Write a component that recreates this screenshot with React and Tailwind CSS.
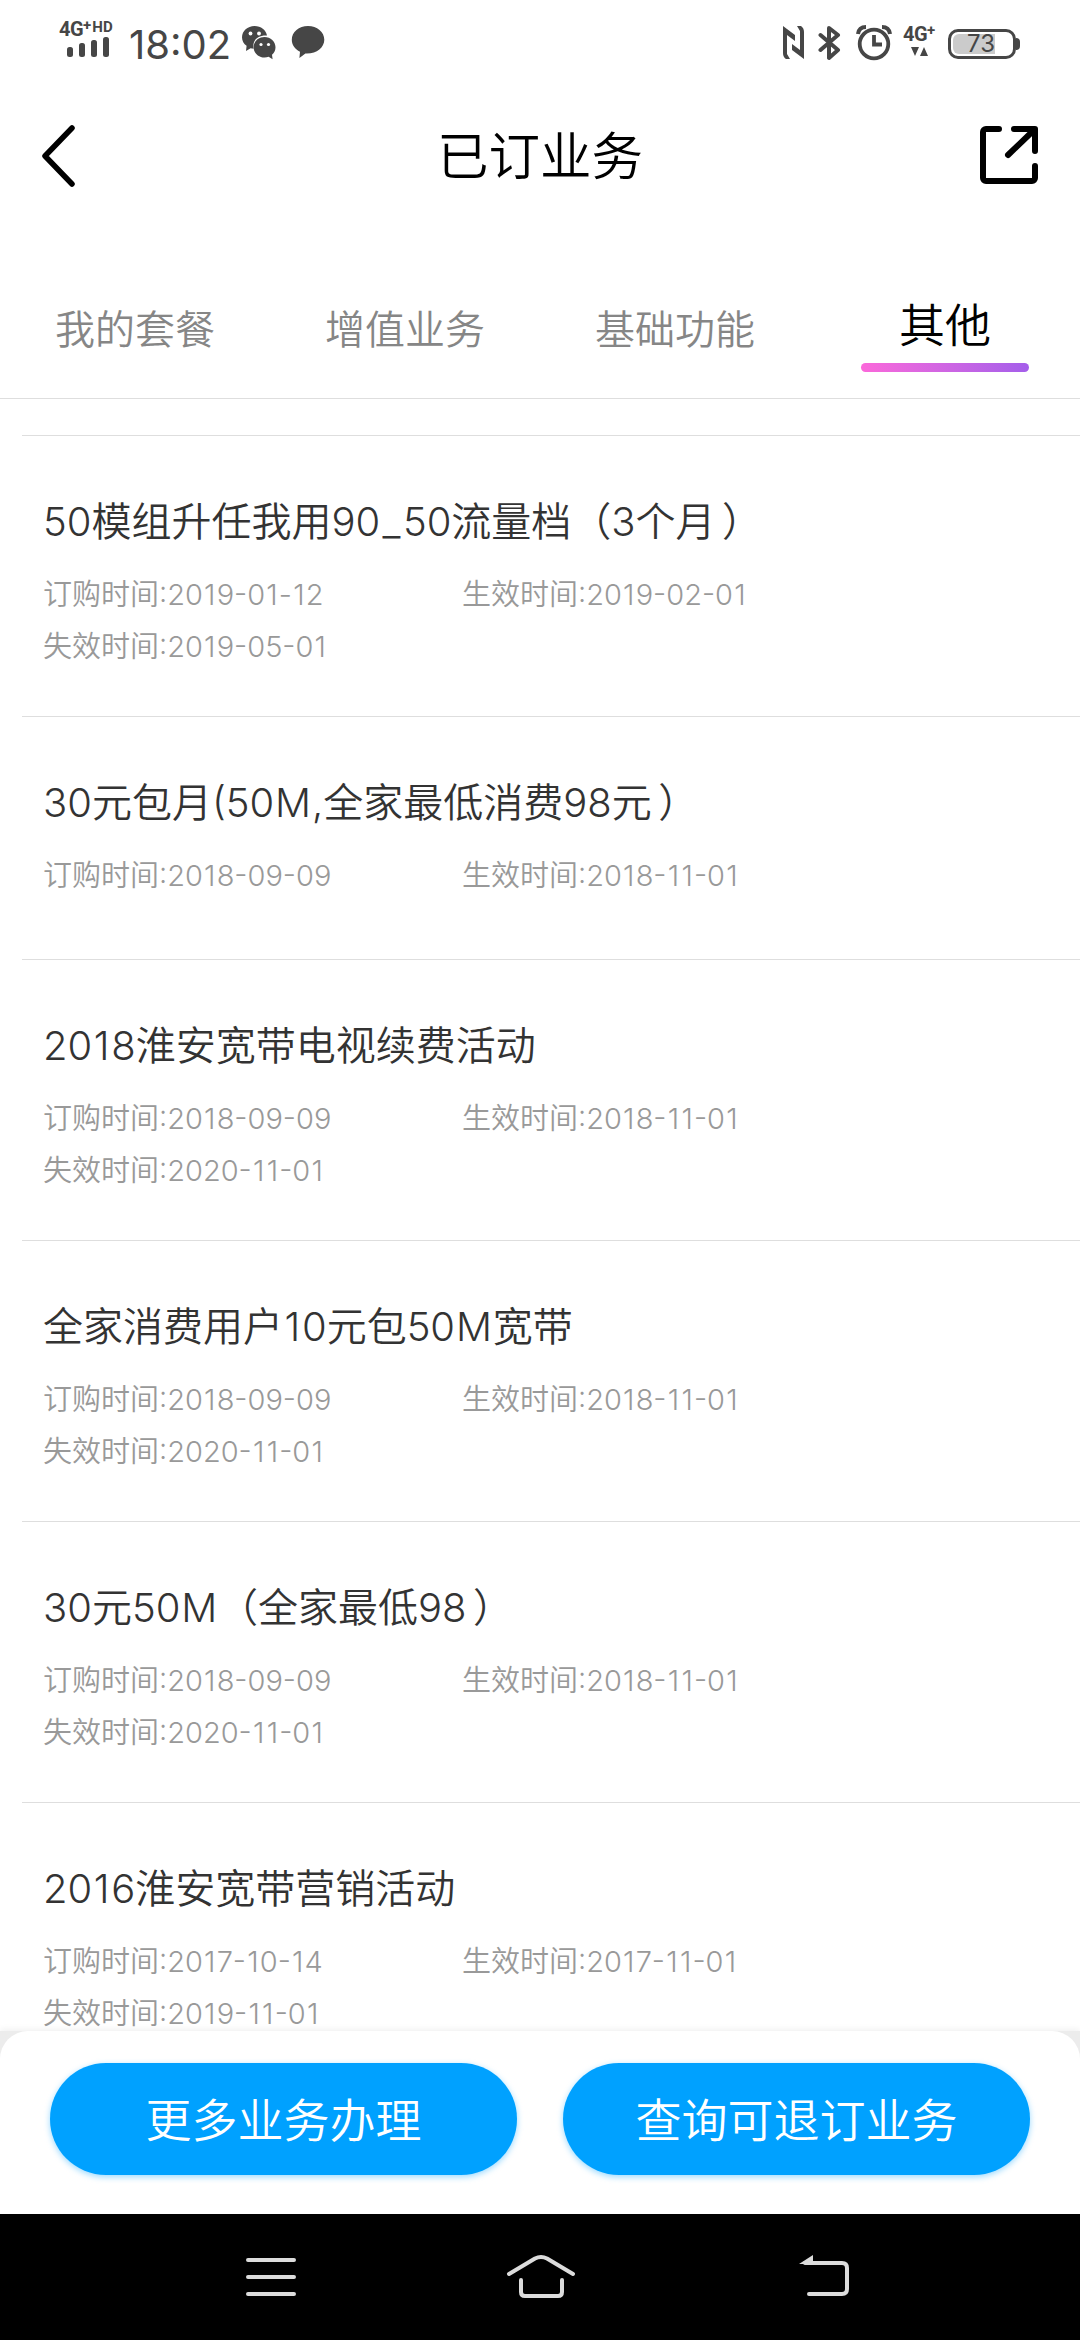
const tabs = ["我的套餐", "增值业务", "基础功能", "其他"];

const orders = [
  { name: "50模组升任我用90_50流量档（3个月）", ordered: "2019-01-12", start: "2019-02-01", end: "2019-05-01" },
  { name: "30元包月(50M,全家最低消费98元）", ordered: "2018-09-09", start: "2018-11-01" },
  { name: "2018淮安宽带电视续费活动", ordered: "2018-09-09", start: "2018-11-01", end: "2020-11-01" },
  { name: "全家消费用户10元包50M宽带", ordered: "2018-09-09", start: "2018-11-01", end: "2020-11-01" },
  { name: "30元50M（全家最低98）", ordered: "2018-09-09", start: "2018-11-01", end: "2020-11-01" },
  { name: "2016淮安宽带营销活动", ordered: "2017-10-14", start: "2017-11-01", end: "2019-11-01" },
];

const spacing = {
  1: "px-[0.04em]",
  _: "px-[0.06em]",
  M: "px-[0.02em]",
  "）": "pl-[0.16em]",
};

function Spaced({ text }) {
  return text.split(/([1_M）])/).map((part, i) =>
    spacing[part] ? (
      <span key={i} className={spacing[part]}>{part}</span>
    ) : (
      part
    )
  );
}

function StatusBar() {
  return (
    <div className="flex h-[84px] shrink-0 items-start justify-between pl-[59px] pr-[60px] text-[#464646]">
      <div className="flex">
        <div className="mt-[21px] flex w-[57px] flex-col">
          <div className="flex h-4 items-start font-['Roboto'] font-bold leading-4">
            <span className="text-[20px] tracking-[-0.5px]">4G</span>
            <span className="-mt-1 text-[15px]">+</span>
            <span className="-mt-[2px] ml-px text-[15px]">HD</span>
          </div>
          <svg className="ml-2" width="44" height="22" fill="currentColor">
            <rect x="0" y="10" width="6" height="10" rx="2.5" />
            <rect x="12" y="6" width="6" height="14" rx="2.5" />
            <rect x="24" y="3" width="6" height="17" rx="2.5" />
            <rect x="36" y="0" width="6" height="20" rx="2.5" />
          </svg>
        </div>
        <span className="ml-[13px] mt-[25px] w-[112px] text-[40px] font-[380] leading-10">18:02</span>
        {/* WeChat */}
        <svg className="mt-[25px]" width="36" height="36" fill="currentColor">
          <path d="M13.5 1C6.500 1 1 6 1 12.200c0 3.600 1.800 6.600 4.600 8.600L5 26l4.600-2.800 3 .5C11 15 17 10 26 10.500 25 5 20 1 13.500 1z" />
          <path d="M23.500 12c-6.100 0-10.900 4.600-10.900 10.200 0 5.700 4.900 10.300 10.900 10.300 1.500 0 2.900-.3 4.100-.8l4 2.500-.6-4.500c2.200-1.800 3.500-4.500 3.500-7.500C34.500 16.600 29.600 12 23.500 12z" />
          <g fill="#fff">
            <circle cx="9.500" cy="8.500" r="1.900" />
            <circle cx="18" cy="8.500" r="1.900" />
            <circle cx="20" cy="19.500" r="1.600" />
            <circle cx="27.500" cy="19.500" r="1.600" />
          </g>
        </svg>
        <svg className="ml-[14px] mt-[25px]" width="36" height="36" fill="currentColor">
          <path d="M17 1C8 1 .8 7 .8 14.700c0 5.300 3.300 9.600 8.200 12l-.6 6.300 6-4.600c11 .6 18.900-5.700 18.900-13.700C33.300 7 26 1 17 1z" />
        </svg>
      </div>
      <div className="flex">
        {/* NFC */}
        <svg className="mt-[26px]" width="21" height="33" fill="currentColor">
          <path d="M0 0l12 9v6L4 9v19l3 5H3Q0 31 0 27z" />
          <path d="M21 33L9 24v-6L17 24V5L14 0h4q3 2 3 6z" />
        </svg>
        <svg className="ml-[14px] mt-[25px]" width="24" height="36" fill="none" stroke="currentColor" strokeWidth="4" strokeLinecap="round" strokeLinejoin="round">
          <path d="M2.500 10L20 25 11 33V3l9 7L2.500 25" />
        </svg>
        <svg className="ml-[14px] mt-[24px]" width="38" height="37" fill="none" stroke="currentColor" strokeWidth="3.800">
          <circle cx="18" cy="20" r="14.300" />
          <path d="M18 11v9.500h8" />
          <path d="M2 10C2.500 6 5 3 10 3M34 10C33.500 6 31 3 26 3" strokeWidth="4" />
        </svg>
        <div className="ml-[9px] mt-[26px] flex w-[45px] flex-col font-['Roboto'] font-bold leading-4">
          <div className="flex h-[21px]">
            <span className="text-[20px] tracking-[-0.5px]">4G</span>
            <span className="-mt-1 text-[15px]">+</span>
          </div>
          <svg className="ml-2" width="18" height="9" fill="currentColor">
            <path d="M0 0h8L4 9zM9 9h8l-4-9z" />
          </svg>
        </div>
        <div className="mt-[27px] flex items-center">
          <div className="flex h-[30px] w-[68px] rounded-[10px] border-[3px] border-[#464646] p-[2px]">
            <div className="flex h-5 w-[42px] items-center justify-end rounded-l-[6px] bg-[#cbcbcb] text-[24px] leading-5">73</div>
          </div>
          <div className="h-3 w-1 rounded-r-full bg-[#464646]" />
        </div>
      </div>
    </div>
  );
}

function Header() {
  return (
    <header className="flex h-[142px] shrink-0 items-center justify-between pl-10 pr-10 text-black">
      <svg width="61" height="64" fill="none" stroke="currentColor" strokeWidth="5.500" strokeLinecap="round" strokeLinejoin="round">
        <path d="M32 5L5 33l27 28" />
      </svg>
      <h1 className="pt-[2px] text-[51.5px] font-[350] leading-[60px]">已订业务</h1>
      <svg width="61" height="60" fill="none" stroke="currentColor" strokeWidth="6" strokeLinecap="round" strokeLinejoin="round">
        <path d="M20 4H7a3 3 0 0 0-3 3v46a3 3 0 0 0 3 3h46a3 3 0 0 0 3-3V41" />
        <path d="M35 4h21v22M55 5L29 30" />
      </svg>
    </header>
  );
}

function Tabs({ active }) {
  return (
    <nav className="grid h-[173px] shrink-0 grid-cols-4 border-b border-[#dedede]">
      {tabs.map((tab) =>
        tab === active ? (
          <div key={tab} className="flex flex-col items-center pt-[69px] text-[46px] font-[350] leading-[60px] text-black">
            {tab}
            <div className="mt-2 h-[9px] w-[168px] rounded-full bg-linear-to-r from-[#fb68da] to-[#a45eea]" />
          </div>
        ) : (
          <div key={tab} className="pt-[74px] text-center text-[40px] font-[350] leading-[60px] text-[#868686]">
            {tab}
          </div>
        )
      )}
    </nav>
  );
}

function Order({ item }) {
  return (
    <li className={`ml-[22px] shrink-0 border-t border-[#dedede] pl-[21px] pt-[56px] font-[350] ${item.end ? "h-[281px]" : "h-[243px]"}`}>
      <h2 className="text-[40px] leading-[60px] text-[#333]">
        <Spaced text={item.name} />
      </h2>
      <div className="mt-[17px] grid grid-cols-[419px_1fr] text-[29px] leading-[52px] text-[#999]">
        <span>订购时间:<Spaced text={item.ordered} /></span>
        <span>生效时间:<Spaced text={item.start} /></span>
        {item.end && <span>失效时间:<Spaced text={item.end} /></span>}
      </div>
    </li>
  );
}

function SystemNav() {
  return (
    <div className="flex h-[126px] shrink-0 bg-black pl-[231px] pt-10 text-[#dcdcdc]">
      {/* menu, home, back */}
      <svg width="80" height="48" fill="none" stroke="currentColor" strokeWidth="4" strokeLinecap="round">
        <path d="M17 6h46M17 23h46M17 40h46" />
      </svg>
      <svg className="ml-[190px]" width="80" height="48" fill="none" stroke="currentColor" strokeWidth="4" strokeLinecap="round" strokeLinejoin="round">
        <path d="M8 20L34 4.500q6-3 12 0L72 20M20 26v12q0 4 4 4h33q4 0 4-4V26" />
      </svg>
      <svg className="ml-[206px]" width="80" height="48" fill="none" stroke="currentColor" strokeWidth="4" strokeLinecap="round">
        <path d="M18 9h37q5 0 5 5v21q0 5-5 5H22" />
        <path d="M12 10L26 1v9z" fill="currentColor" stroke="none" />
      </svg>
    </div>
  );
}

export default function App() {
  return (
    <div className="flex h-[2340px] w-[1080px] flex-col overflow-hidden bg-white font-['Inter','Noto_Sans_CJK_SC',sans-serif]">
      <StatusBar />
      <Header />
      <Tabs active="其他" />
      <ul className="flex min-h-0 flex-1 flex-col overflow-hidden pt-9">
        {orders.map((item) => (
          <Order key={item.name} item={item} />
        ))}
      </ul>
      <div className="h-[183px] shrink-0 bg-[#ececec] shadow-[0_-2px_6px_rgba(0,0,0,0.06)]">
        <div className="flex h-full gap-[46px] rounded-t-[28px] bg-white px-[50px] pt-8 text-[46px] font-[350] text-white">
          <button className="h-[112px] flex-1 rounded-full bg-[#00a1ff] pt-[2px] shadow-[0_2px_6px_rgba(0,161,255,0.4)]">更多业务办理</button>
          <button className="h-[112px] flex-1 rounded-full bg-[#00a1ff] pt-[2px] shadow-[0_2px_6px_rgba(0,161,255,0.4)]">查询可退订业务</button>
        </div>
      </div>
      <SystemNav />
    </div>
  );
}
